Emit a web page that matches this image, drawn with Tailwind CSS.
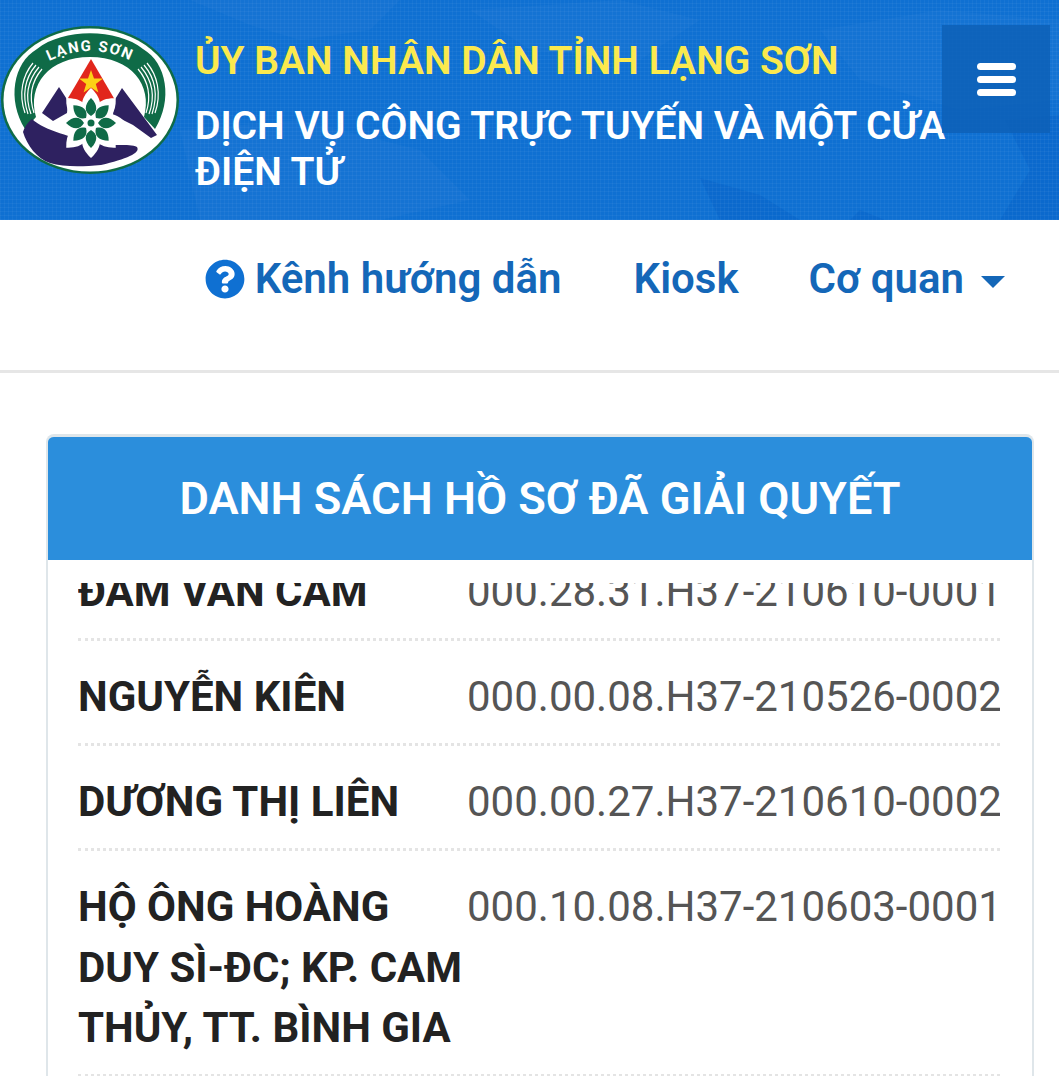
<!DOCTYPE html>
<html lang="vi">
<head>
  <meta charset="UTF-8">
  <title>Dịch vụ công trực tuyến - Lạng Sơn</title>
  <script src="https://cdn.jsdelivr.net/npm/@tailwindcss/browser@4"></script>
</head>
<body class="h-[1076px] overflow-hidden bg-white font-['Roboto',sans-serif]">

  <!-- header -->
  <header class="relative flex h-[220px] overflow-hidden bg-[#0f70d2]">
    <svg class="absolute inset-0" width="1059" height="220" viewBox="0 0 1059 220">
      <g fill="#2a80d8" opacity="0.22">
        <path d="M190 0 L400 0 L370 30 L300 40 L250 25 Z"/>
        <path d="M470 10 L620 0 L700 20 L640 60 L530 50 Z"/>
        <path d="M180 130 L300 120 L420 150 L470 200 L380 220 L200 220 Z"/>
        <path d="M820 30 L940 10 L1059 20 L1059 100 L960 110 L860 80 Z"/>
      </g>
      <g fill="#0a68cc" opacity="0.8">
        <path d="M700 178 L760 195 L800 220 L720 220 Z"/>
        <path d="M1005 120 L1059 115 L1059 220 L1000 220 L1030 170 Z"/>
        <path d="M860 210 L885 220 L850 220 Z"/>
      </g>
    </svg>
    <div class="absolute inset-0 bg-[repeating-linear-gradient(90deg,rgba(255,255,255,0.04)_0,rgba(255,255,255,0.04)_1px,transparent_1px,transparent_4px),repeating-linear-gradient(0deg,rgba(255,255,255,0.04)_0,rgba(255,255,255,0.04)_1px,transparent_1px,transparent_4px)]"></div>

    <!-- logo -->
    <svg class="relative mt-[25px] ml-[1px] shrink-0" width="179" height="150" viewBox="0 0 179 150">
      <defs>
        <path id="arc-text" d="M37 42 Q89 10 141 42"/>
        <path id="white-petal" d="M0 -3 C-12 -12 -12 -24 0 -35 C12 -24 12 -12 0 -3 Z" fill="#fff"/>
        <path id="green-petal" d="M0 -7 C-7 -11 -7 -18 0 -25 C7 -18 7 -11 0 -7 Z" fill="#0f6b47"/>
      </defs>
      <ellipse cx="89" cy="75" rx="89" ry="74" fill="#0f6b47"/>
      <ellipse cx="89" cy="75" rx="86.500" ry="71.500" fill="#fff"/>
      <!-- green arch -->
      <path d="M24 104 C6 75 12 38 36 24 C62 3 116 3 142 24 C166 38 172 75 154 104 L143 92 C152 60 130 32 89 32 C48 32 26 60 35 92 Z" fill="#0f6b47"/>
      <g fill="none" stroke="#fff" stroke-width="1.200">
        <path d="M24 88 C17 68 22 50 32 38"/>
        <path d="M27 89 C20 68 25 52 35 40"/>
        <path d="M30 89 C23 70 28 54 38 42"/>
        <path d="M33 88 C27 70 31 56 41 44"/>
        <path d="M154 88 C161 68 156 50 146 38"/>
        <path d="M151 89 C158 68 153 52 143 40"/>
        <path d="M148 89 C155 70 150 54 140 42"/>
        <path d="M145 88 C151 70 147 56 137 44"/>
      </g>
      <text font-family="Roboto, sans-serif" font-weight="700" font-size="15" fill="#fff" letter-spacing="1.500">
        <textPath href="#arc-text" startOffset="50%" text-anchor="middle">LẠNG SƠN</textPath>
      </text>
      <!-- mountains -->
      <path d="M41 88 L58 62 L67 76 L66 88 L52 96 Z" fill="#2e2160"/>
      <path d="M113 76 L121 63 L156 110 L150 113 L132 100 L112 90 Z" fill="#2e2160"/>
      <path d="M67 73 L90 34 L114 75 L100 85 L80 85 Z" fill="#e1261c"/>
      <path d="M90 45 L93 53.500 L102 53.500 L94.800 59 L97.400 67.500 L90 62.500 L82.600 67.500 L85.200 59 L78 53.500 L87 53.500 Z" fill="#fcd116"/>
      <!-- river bank -->
      <path d="M22 107 C24 101 28 96 31 94 C44 106 72 112 92 118 C110 122 128 118 136 122 C140 128 125 134 100 140 C80 142 62 142 49 138 C36 134 26 120 22 107 Z" fill="#2e2160"/>
      <!-- flower -->
      <g transform="translate(90 98)">
        <use href="#white-petal"/>
        <use href="#white-petal" transform="rotate(45)"/>
        <use href="#white-petal" transform="rotate(90)"/>
        <use href="#white-petal" transform="rotate(135)"/>
        <use href="#white-petal" transform="rotate(180)"/>
        <use href="#white-petal" transform="rotate(225)"/>
        <use href="#white-petal" transform="rotate(270)"/>
        <use href="#white-petal" transform="rotate(315)"/>
        <use href="#green-petal"/>
        <use href="#green-petal" transform="rotate(45)"/>
        <use href="#green-petal" transform="rotate(90)"/>
        <use href="#green-petal" transform="rotate(135)"/>
        <use href="#green-petal" transform="rotate(180)"/>
        <use href="#green-petal" transform="rotate(225)"/>
        <use href="#green-petal" transform="rotate(270)"/>
        <use href="#green-petal" transform="rotate(315)"/>
        <circle r="3.500" fill="#0f6b47"/>
      </g>
    </svg>

    <div class="relative ml-[15px] w-[760px] shrink-0 pt-[38px]">
      <h1 class="text-[39px] leading-[46px] font-semibold whitespace-nowrap text-[#fbe94e]">ỦY BAN NHÂN DÂN TỈNH LẠNG SƠN</h1>
      <h2 class="mt-[19px] text-[39px] leading-[46px] font-semibold text-white">DỊCH VỤ CÔNG TRỰC TUYẾN VÀ MỘT CỬA ĐIỆN TỬ</h2>
    </div>

    <button class="absolute top-[25px] right-[9px] flex h-[108px] w-[108px] flex-col items-center justify-center gap-[6px] bg-[#0d5fb5]/80">
      <span class="h-[7px] w-[39px] rounded-sm bg-white"></span>
      <span class="h-[7px] w-[39px] rounded-sm bg-white"></span>
      <span class="h-[7px] w-[39px] rounded-sm bg-white"></span>
    </button>
  </header>

  <!-- nav -->
  <nav class="flex h-[153px] items-start justify-end gap-[70px] border-b-[3px] border-[#e6e6e6] pt-[35px] pr-[54px] text-[42px] leading-[48px] font-semibold text-[#1467b8]">
    <a class="mr-[2px] flex items-center gap-[10px]" href="#">
      <svg class="h-[40px] w-[40px]" viewBox="0 0 512 512" fill="#0f70d2"><path d="M504 256c0 137-111 248-248 248S8 393 8 256 119 8 256 8s248 111 248 248zM262.700 90c-54.500 0-89.300 23-116.500 63.800-3.500 5.300-2.400 12.400 2.700 16.300l34.700 26.300c5.200 3.900 12.600 3 16.700-2.100 17.900-22.700 30.100-35.800 57.300-35.800 20.400 0 45.700 13.100 45.700 33 0 15-12.400 22.700-32.600 34-23.600 13.200-54.800 29.700-54.800 70.900V300c0 6.600 5.400 12 12 12h56c6.600 0 12-5.400 12-12v-1.300c0-28.500 83.400-29.700 83.400-106.800 0-58-60.200-101.900-116.600-101.900zM256 338c-25.400 0-46 20.600-46 46s20.600 46 46 46 46-20.600 46-46-20.600-46-46-46z"/></svg>
      Kênh hướng dẫn
    </a>
    <a href="#">Kiosk</a>
    <a class="flex items-center gap-[17px]" href="#">
      Cơ quan
      <span class="mt-[6px] h-0 w-0 border-x-[12px] border-t-[12px] border-x-transparent border-t-[#1467b8]"></span>
    </a>
  </nav>

  <!-- card -->
  <main class="pt-[61px] pr-[25px] pl-[46px]">
    <section class="overflow-hidden rounded-t-[8px] border-x-2 border-t-[3px] border-[#dfe6ea]">
      <h3 class="flex h-[123px] items-center justify-center bg-[#2b8edc] text-[45.200px] font-semibold text-white">DANH SÁCH HỒ SƠ ĐÃ GIẢI QUYẾT</h3>
      <div class="pt-[23px] pr-[32px] pl-[30px]">
        <div class="h-[497px] overflow-hidden">
          <ul class="mt-[-47px] text-[42px] leading-[60.500px]">
            <li class="flex items-start border-b-[3px] border-dotted border-[#e4e4e4] pt-[26px] pb-[15.500px]">
              <span class="w-[389px] shrink-0 font-bold text-[#222]">ĐÀM VĂN CẢM</span>
              <span class="whitespace-nowrap text-[#555]">000.28.31.H37-210610-0001</span>
            </li>
            <li class="flex items-start border-b-[3px] border-dotted border-[#e4e4e4] pt-[26px] pb-[15.500px]">
              <span class="w-[389px] shrink-0 font-bold text-[#222]">NGUYỄN KIÊN</span>
              <span class="whitespace-nowrap text-[#555]">000.00.08.H37-210526-0002</span>
            </li>
            <li class="flex items-start border-b-[3px] border-dotted border-[#e4e4e4] pt-[26px] pb-[15.500px]">
              <span class="w-[389px] shrink-0 font-bold text-[#222]">DƯƠNG THỊ LIÊN</span>
              <span class="whitespace-nowrap text-[#555]">000.00.27.H37-210610-0002</span>
            </li>
            <li class="flex items-start border-b-[3px] border-dotted border-[#e4e4e4] pt-[26px] pb-[15.500px]">
              <span class="w-[389px] shrink-0 font-bold text-[#222]">HỘ ÔNG HOÀNG DUY SÌ-ĐC; KP. CAM THỦY, TT. BÌNH GIA</span>
              <span class="whitespace-nowrap text-[#555]">000.10.08.H37-210603-0001</span>
            </li>
          </ul>
        </div>
      </div>
    </section>
  </main>

</body>
</html>
